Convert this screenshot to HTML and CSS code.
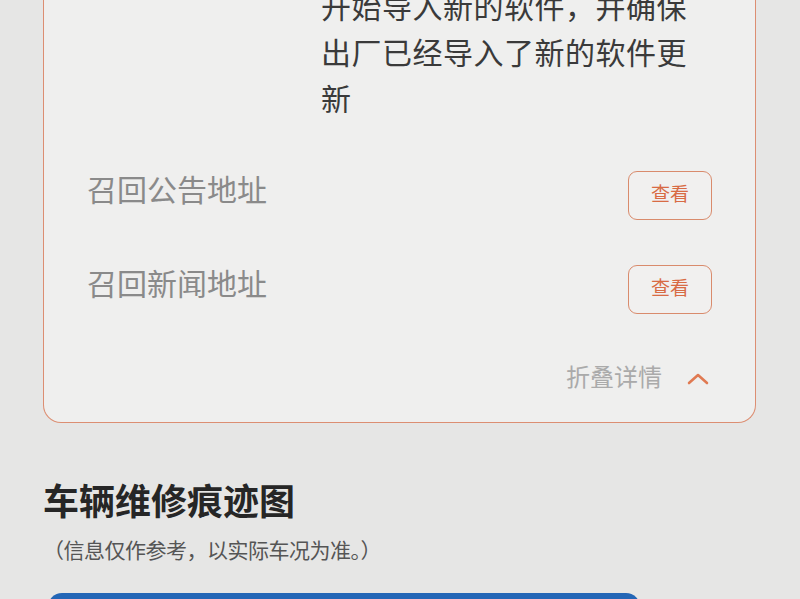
FILE: index.html
```html
<!DOCTYPE html>
<html lang="zh-CN">
<head>
    <meta charset="UTF-8">
    <meta name="viewport" content="width=device-width, initial-scale=1.0">
    <title>召回详情</title>
    <link rel="stylesheet" href="styles.css">
</head>
<body>

<div class="page">
    <!-- 召回信息卡片 -->
    <div class="recall-card">
        <div class="info-row">
            <div class="info-label">召回措施</div>
            <div class="info-value">开始导入新的软件，并确保出厂已经导入了新的软件更新</div>
        </div>

        <div class="link-row">
            <span class="link-label">召回公告地址</span>
            <button class="view-btn">查看</button>
        </div>

        <div class="link-row">
            <span class="link-label">召回新闻地址</span>
            <button class="view-btn">查看</button>
        </div>

        <div class="fold-row">
            <span>折叠详情</span>
            <svg class="fold-icon" width="24" height="14" viewBox="0 0 24 14">
                <path d="M3 12 L12 4 L21 12" fill="none" stroke="#e07a52" stroke-width="2.6" stroke-linecap="round" stroke-linejoin="round"/>
            </svg>
        </div>
    </div>

    <!-- 维修痕迹 -->
    <div class="repair-section">
        <h2>车辆维修痕迹图</h2>
        <p class="repair-note">（信息仅作参考，以实际车况为准。）</p>
        <div class="repair-bar"></div>
    </div>
</div>

</body>
</html>
```

FILE: styles.css
```css
body {
    font-family: "Noto Sans CJK SC", "Noto Sans", sans-serif;
    background-color: #e6e6e5;
    color: #333;
    margin: 0;
    padding: 0;
    overflow: hidden;
}

.page {
    padding: 0 44px 0 43px;
}

/* карточка уходит за верхний край, как будто страница прокручена */
.recall-card {
    margin-top: -63px;
    padding: 45px 43px 30px 43px;
    background-color: #efefee;
    border: 1.5px solid #dc8e72;
    border-top: none;
    border-radius: 0 0 18px 18px;
}

.info-row {
    display: flex;
}

.info-label {
    width: 234px;
    flex-shrink: 0;
    font-size: 30px;
    color: #888;
    line-height: 46px;
    visibility: hidden;
}

.info-value {
    font-size: 30px;
    line-height: 46px;
    color: #3a3a3a;
    letter-spacing: 0.5px;
    padding-right: 20px;
}

.link-row {
    display: flex;
    justify-content: space-between;
    align-items: flex-start;
    height: 50px;
    margin-top: 51px;
}

.link-row + .link-row {
    margin-top: 44px;
}

.link-label {
    font-size: 30px;
    line-height: 34px;
    color: #8a8a8a;
}

.view-btn {
    width: 84px;
    height: 49px;
    border: 1.5px solid #d98b6c;
    border-radius: 9px;
    background-color: #f1f0ef;
    color: #d86b44;
    font-family: inherit;
    font-size: 19px;
    padding: 0 0 6px 0;
    cursor: pointer;
}

.fold-row {
    display: flex;
    justify-content: flex-end;
    align-items: center;
    gap: 24px;
    margin-top: 45px;
    padding-right: 2px;
    font-size: 24px;
    color: #aaa;
    line-height: 32px;
}

.fold-icon {
    margin-top: 4px;
}

.repair-section h2 {
    margin: 53px 0 0 0;
    font-size: 36px;
    font-weight: bold;
    line-height: 46px;
    color: #262626;
}

.repair-note {
    margin: 13px 0 0 0;
    font-size: 21px;
    line-height: 28px;
    color: #555;
    letter-spacing: -0.5px;
}

.repair-bar {
    margin: 30px 0 0 5px;
    width: 592px;
    height: 40px;
    background-color: #2366b6;
    border-radius: 14px 14px 0 0;
}
```
